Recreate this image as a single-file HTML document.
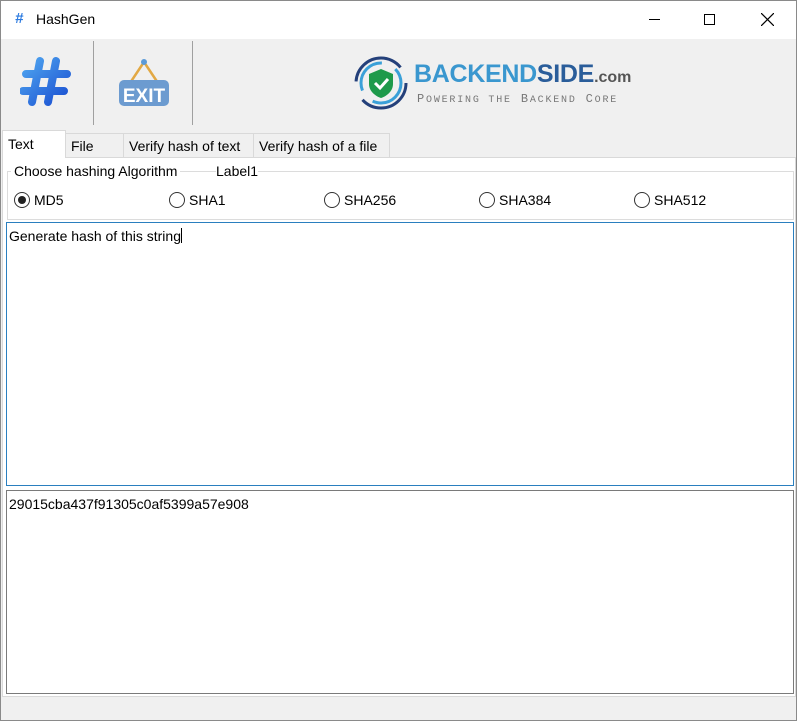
<!DOCTYPE html>
<html><head><style>
*{margin:0;padding:0;box-sizing:border-box}
body{width:797px;height:721px;background:#f0f0f0;font-family:"Segoe UI","Liberation Sans",sans-serif;font-size:14px;color:#000;position:relative;overflow:hidden}
.abs{position:absolute}
.win{left:0;top:0;width:797px;height:721px;border:1px solid #8a8a8a}
.title{left:1px;top:1px;width:795px;height:38px;background:#fff}
.sep{width:1px;background:#a0a0a0;top:41px;height:84px}
.tab{top:133px;height:25px;border:1px solid #d9d9d9;border-bottom:none;background:#f0f0f0;padding:4px 5px 0;font-size:14px;white-space:nowrap}
.radio{top:192px;width:16px;height:16px;border:1px solid #333;border-radius:50%;background:#fff}
.rl{top:192px;font-size:14px}
</style></head><body>
<div class="abs title"></div>
<div class="abs" style="left:15px;top:10px;color:#2d7be0;font-weight:bold;font-size:15px;font-style:italic">#</div>
<div class="abs" style="left:36px;top:11px;font-size:14px">HashGen</div>
<div class="abs" style="left:649px;top:19px;width:11px;height:1px;background:#000"></div>
<div class="abs" style="left:704px;top:14px;width:11px;height:11px;border:1px solid #000"></div>
<svg class="abs" style="left:761px;top:13px" width="13" height="13"><path d="M0 0L13 13M13 0L0 13" stroke="#000" stroke-width="1.2"/></svg>

<svg class="abs" style="left:20px;top:56px" width="52" height="52" viewBox="0 0 52 52"><defs><linearGradient id="g" x1="0" y1="0" x2="1" y2="1"><stop offset="0" stop-color="#4fa6f0"/><stop offset="1" stop-color="#1a4fd1"/></linearGradient></defs>
<path d="M20 5L12 46M36 5L28 46M6 18H47M3 35H44" stroke="url(#g)" stroke-width="8" stroke-linecap="round"/></svg>
<div class="abs sep" style="left:93px"></div>
<svg class="abs" style="left:116px;top:58px" width="56" height="50"><path d="M28 4L12 28M28 4L44 28" stroke="#e2a844" stroke-width="2.5" fill="none"/><circle cx="28" cy="4" r="3" fill="#5b9ad8"/><rect x="3" y="22" width="50" height="26" rx="5" fill="#6c9bd0"/><text x="28" y="44" font-family="Liberation Sans" font-weight="bold" font-size="19" fill="#fff" text-anchor="middle">EXIT</text></svg>
<div class="abs sep" style="left:192px"></div>

<svg class="abs" style="left:353px;top:55px" width="56" height="56"><circle cx="28" cy="28" r="25" fill="none" stroke="#24407a" stroke-width="3" stroke-dasharray="60 20"/><circle cx="28" cy="28" r="20" fill="none" stroke="#3aa0d8" stroke-width="3" stroke-dasharray="40 15"/><path d="M28 14L40 19V29C40 36 34 41 28 43C22 41 16 36 16 29V19Z" fill="#1e9a4b"/><path d="M22 28L27 33L35 24" stroke="#fff" stroke-width="3" fill="none"/></svg>
<div class="abs" style="left:414px;top:59px;font-family:'Liberation Sans',sans-serif;font-weight:bold;font-size:25px;line-height:30px;white-space:nowrap"><span style="color:#3a97cf;letter-spacing:-0.3px">BACKEND</span><span style="color:#2a5d9a;letter-spacing:-0.3px">SIDE</span><span style="color:#555;font-size:16px">.com</span></div>
<div class="abs" style="left:417px;top:92px;font-family:'Liberation Mono',monospace;font-size:12px;color:#777;letter-spacing:1.8px;white-space:nowrap">P<span style="font-size:10px">OWERING THE</span> B<span style="font-size:10px">ACKEND</span> C<span style="font-size:10px">ORE</span></div>

<div class="abs tab" style="left:65px;width:59px">File</div>
<div class="abs tab" style="left:123px;width:131px">Verify hash of text</div>
<div class="abs tab" style="left:253px;width:137px">Verify hash of a file</div>
<div class="abs" style="left:2px;top:157px;width:794px;height:540px;background:#fff;border:1px solid #d9d9d9"></div>
<div class="abs tab" style="left:2px;top:130px;height:28px;width:64px;background:#fff;padding-top:5px">Text</div>

<div class="abs" style="left:7px;top:171px;width:787px;height:49px;border:1px solid #dcdcdc"></div>
<div class="abs" style="left:11px;top:163px;background:#fff;padding:0 3px">Choose hashing Algorithm</div>
<div class="abs" style="left:216px;top:163px;background:#fff">Label1</div>
<div class="abs radio" style="left:14px"><div style="position:absolute;left:3px;top:3px;width:8px;height:8px;border-radius:50%;background:#222"></div></div><div class="abs rl" style="left:34px">MD5</div>
<div class="abs radio" style="left:169px"></div><div class="abs rl" style="left:189px">SHA1</div>
<div class="abs radio" style="left:324px"></div><div class="abs rl" style="left:344px">SHA256</div>
<div class="abs radio" style="left:479px"></div><div class="abs rl" style="left:499px">SHA384</div>
<div class="abs radio" style="left:634px"></div><div class="abs rl" style="left:654px">SHA512</div>

<div class="abs" style="left:6px;top:222px;width:788px;height:264px;border:1px solid #2a7fbf;background:#fff;padding:5px 2px">Generate hash of this string<span style="display:inline-block;width:1px;height:15px;background:#000;vertical-align:-2px"></span></div>
<div class="abs" style="left:6px;top:490px;width:788px;height:204px;border:1px solid #7a7a7a;background:#fff;padding:5px 2px">29015cba437f91305c0af5399a57e908</div>
<div class="abs win"></div>
</body></html>
